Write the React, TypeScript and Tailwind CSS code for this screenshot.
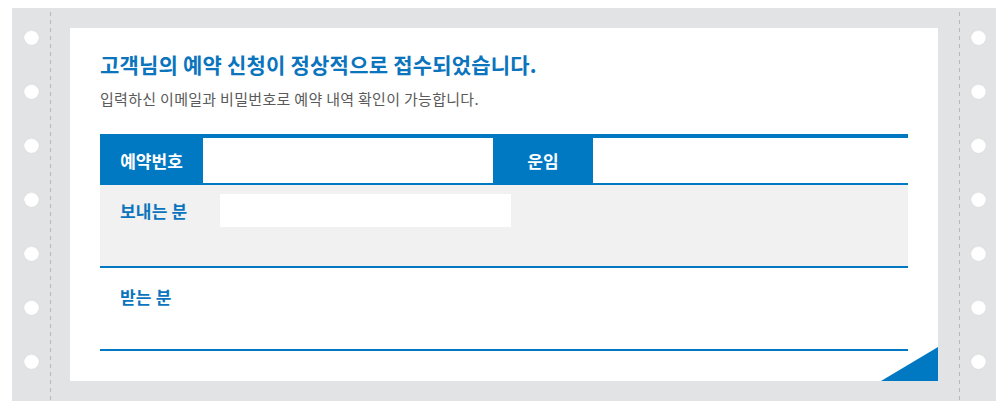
import React from 'react'

const holes = [0, 1, 2, 3, 4, 5, 6]

function Strip({ side }: { side: 'left' | 'right' }) {
  // 구멍 + 점선 (좌우 대칭)
  const holeCol = (
    <div className="flex flex-col items-center pt-[22px] gap-[39px]">
      {holes.map((i) => (
        <div
          key={i}
          className="w-[15px] h-[15px] rounded-full bg-white shadow-[inset_0_1px_1px_rgba(0,0,0,0.08),0_0_1px_rgba(0,0,0,0.12)]"
        />
      ))}
    </div>
  )
  const dash = (
    <div className="w-px self-stretch mt-1 bg-[repeating-linear-gradient(to_bottom,#b9b9b9_0_4px,transparent_4px_8px)]" />
  )

  if (side === 'left') {
    return (
      <div className="w-[58px] flex shrink-0">
        <div className="w-[38px] flex justify-center">{holeCol}</div>
        {dash}
      </div>
    )
  }
  return (
    <div className="w-[58px] flex shrink-0">
      <div className="w-[21px]" />
      {dash}
      <div className="flex-1 flex justify-center">{holeCol}</div>
    </div>
  )
}

export default function App() {
  return (
    <div
      className="w-[1006px] h-[409px] bg-white pl-[12px] pr-[10px] pt-[8px] pb-[8px]"
      style={{ fontFamily: '"Noto Sans CJK KR", "Noto Sans", sans-serif' }}
    >
      <div className="h-full flex bg-[#e2e3e5]">
        <Strip side="left" />

        {/* 카드 */}
        <div className="flex-1 my-[20px] bg-white relative px-[30px] pt-[21px]">
          <h1 className="text-[21px] leading-[30px] font-bold text-[#0a74bd] tracking-[0.2px]">
            고객님의 예약 신청이 정상적으로 접수되었습니다.
          </h1>
          <p className="mt-[10px] text-[15px] leading-[20px] text-[#5a5a5a] tracking-[0.3px]">
            입력하신 이메일과 비밀번호로 예약 내역 확인이 가능합니다.
          </p>

          <div className="mt-[25px] border-t-4 border-[#0079c2]">
            {/* 예약번호 / 운임 */}
            <div className="flex h-[47px] border-b-2 border-[#0079c2]">
              <div className="w-[103px] bg-[#0079c2] flex items-center justify-center text-white text-[17px] font-bold">
                예약번호
              </div>
              <div className="w-[290px] bg-white" />
              <div className="w-[100px] bg-[#0079c2] flex items-center justify-center text-white text-[17px] font-bold">
                운임
              </div>
              <div className="flex-1 bg-white" />
            </div>

            {/* 보내는 분 */}
            <div className="h-[83px] bg-[#f1f1f1] border-b-2 border-[#0079c2] flex items-start pt-[9px]">
              <div className="w-[120px] pl-[20px] pt-[5px] text-[17px] leading-[24px] font-bold text-[#0a74bd] tracking-[0.2px]">
                보내는 분
              </div>
              <div className="w-[291px] h-[33px] bg-white" />
            </div>

            {/* 받는 분 */}
            <div className="h-[83px] border-b-2 border-[#0079c2] pl-[20px] pt-[17px]">
              <div className="text-[17px] leading-[24px] font-bold text-[#0a74bd] tracking-[0.2px]">
                받는 분
              </div>
            </div>
          </div>

          {/* 모서리 삼각형 */}
          <svg className="absolute right-0 bottom-0" width="57" height="34" viewBox="0 0 57 34">
            <polygon points="0,34 57,34 57,0" fill="#0079c2" />
          </svg>
        </div>

        <Strip side="right" />
      </div>
    </div>
  )
}
